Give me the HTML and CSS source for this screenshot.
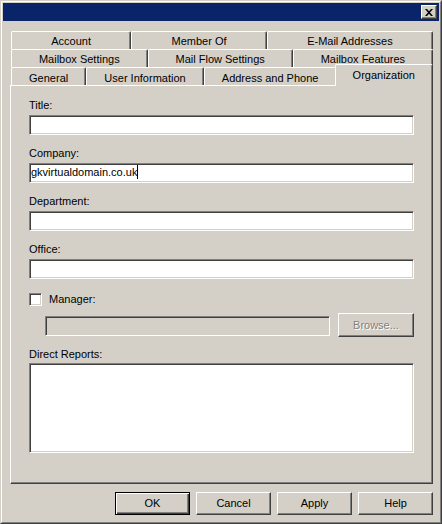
FILE: index.html
```html
<!DOCTYPE html>
<html>
<head>
<meta charset="utf-8">
<title>Properties</title>
<link rel="stylesheet" href="styles.css">
</head>
<body>
<div class="window">
  <div class="frame">
    <div class="titlebar">
      <button class="close" aria-label="Close">
        <svg width="8" height="7" viewBox="0 0 8 7"><path d="M0 0h2l2 2.2L6 0h2L5 3.5 8 7H6L4 4.8 2 7H0l3-3.5z" fill="#000"/></svg>
      </button>
    </div>
    <div class="content">
      <div class="tabs">
        <div class="tab-row">
          <div class="tab">Account</div>
          <div class="tab">Member Of</div>
          <div class="tab">E-Mail Addresses</div>
        </div>
        <div class="tab-row">
          <div class="tab">Mailbox Settings</div>
          <div class="tab">Mail Flow Settings</div>
          <div class="tab">Mailbox Features</div>
        </div>
        <div class="tab-row">
          <div class="tab">General</div>
          <div class="tab">User Information</div>
          <div class="tab">Address and Phone</div>
          <div class="tab selected">Organization</div>
        </div>
      </div>
      <div class="panel">
        <div class="label">Title:</div>
        <div class="input"></div>
        <div class="label">Company:</div>
        <div class="input">gkvirtualdomain.co.uk<span class="caret"></span></div>
        <div class="label">Department:</div>
        <div class="input"></div>
        <div class="label">Office:</div>
        <div class="input"></div>
        <div class="check-row">
          <span class="checkbox"></span>
          <span>Manager:</span>
        </div>
        <div class="manager-row">
          <div class="input disabled"></div>
          <button class="btn browse">Browse...</button>
        </div>
        <div class="label reports-label">Direct Reports:</div>
        <div class="input list"></div>
      </div>
      <div class="actions">
        <button class="btn default">OK</button>
        <button class="btn">Cancel</button>
        <button class="btn">Apply</button>
        <button class="btn">Help</button>
      </div>
    </div>
  </div>
</div>
</body>
</html>
```
FILE: styles.css
```css
html, body {
  margin: 0;
  padding: 0;
}
body {
  background: #d4d0c8;
  font: 11px "Liberation Sans", Arial, sans-serif;
  color: #000;
}
.window {
  width: 442px;
  height: 524px;
  box-sizing: border-box;
  border: 1px solid;
  border-color: #d4d0c8 #404040 #404040 #d4d0c8;
  overflow: hidden;
}
.frame {
  height: 100%;
  box-sizing: border-box;
  border: 1px solid;
  border-color: #fff #808080 #808080 #fff;
  padding: 1px;
}
.titlebar {
  height: 18px;
  background: #0a246a;
  display: flex;
  justify-content: flex-end;
  align-items: center;
  padding-right: 2px;
}
.close {
  width: 16px;
  height: 14px;
  box-sizing: border-box;
  padding: 0;
  margin: 0;
  background: #d4d0c8;
  border: 1px solid;
  border-color: #fff #404040 #404040 #fff;
  box-shadow: inset -1px -1px #808080;
  display: flex;
  align-items: center;
  justify-content: center;
}
.content {
  padding: 10px 6px 0 7px;
}
.tabs {
  margin-left: 1px;
}
.tab-row {
  display: flex;
  height: 18px;
}
.tab {
  flex: 1 1 auto;
  box-sizing: border-box;
  height: 18px;
  border-top: 1px solid #fff;
  border-left: 1px solid #fff;
  border-right: 1px solid #404040;
  border-top-left-radius: 2px;
  border-top-right-radius: 2px;
  box-shadow: inset -1px 0 #808080;
  background: #d4d0c8;
  text-align: center;
  padding-top: 1px;
  line-height: 16px;
  white-space: nowrap;
}
.tab-row:last-child .tab {
  padding-top: 2px;
}
.tab.selected {
  height: 22px;
  margin: -3px 0 -1px -2px;
  padding-top: 3px;
  position: relative;
  z-index: 1;
}
.panel {
  height: 399px;
  box-sizing: border-box;
  border: 1px solid;
  border-color: #fff #404040 #404040 #fff;
  box-shadow: inset -1px -1px #808080;
  padding: 13px 18px 0 18px;
}
.label {
  line-height: 13px;
  margin-bottom: 3px;
  white-space: nowrap;
}
.input {
  height: 20px;
  box-sizing: border-box;
  background: #fff;
  border: 1px solid;
  border-color: #808080 #fff #fff #808080;
  box-shadow: inset 1px 1px #404040, inset -1px -1px #d4d0c8;
  margin-bottom: 12px;
  padding: 0 0 0 1px;
  line-height: 16px;
  white-space: nowrap;
}
.caret {
  display: inline-block;
  width: 1px;
  height: 14px;
  background: #000;
  vertical-align: -3px;
}
.check-row {
  display: flex;
  align-items: center;
  gap: 7px;
  height: 13px;
  line-height: 13px;
  margin-top: 14px;
}
.checkbox {
  width: 13px;
  height: 13px;
  box-sizing: border-box;
  background: #fff;
  border: 1px solid;
  border-color: #808080 #fff #fff #808080;
  box-shadow: inset 1px 1px #404040, inset -1px -1px #d4d0c8;
}
.manager-row {
  display: flex;
  align-items: flex-start;
  gap: 8px;
  margin: 7px 0 0 16px;
}
.input.disabled {
  flex: 1 1 auto;
  background: #d4d0c8;
  margin: 3px 0 0 0;
}
.reports-label {
  margin-top: 11px;
  margin-bottom: 2px;
}
.input.list {
  height: 90px;
  margin-bottom: 0;
}
.actions {
  display: flex;
  justify-content: flex-end;
  gap: 6px;
  margin-top: 8px;
}
.btn {
  width: 75px;
  height: 23px;
  box-sizing: border-box;
  margin: 0;
  padding: 0;
  background: #d4d0c8;
  border: 1px solid;
  border-color: #fff #404040 #404040 #fff;
  box-shadow: inset -1px -1px #808080;
  font: inherit;
  color: #000;
  line-height: 21px;
  text-align: center;
}
.btn.default {
  border-color: #000;
  box-shadow: inset 1px 1px #fff, inset -1px -1px #404040, inset -2px -2px #808080;
}
.btn.browse {
  width: 76px;
  height: 24px;
  line-height: 22px;
  color: #808080;
  text-shadow: 1px 1px #fff;
}
```
